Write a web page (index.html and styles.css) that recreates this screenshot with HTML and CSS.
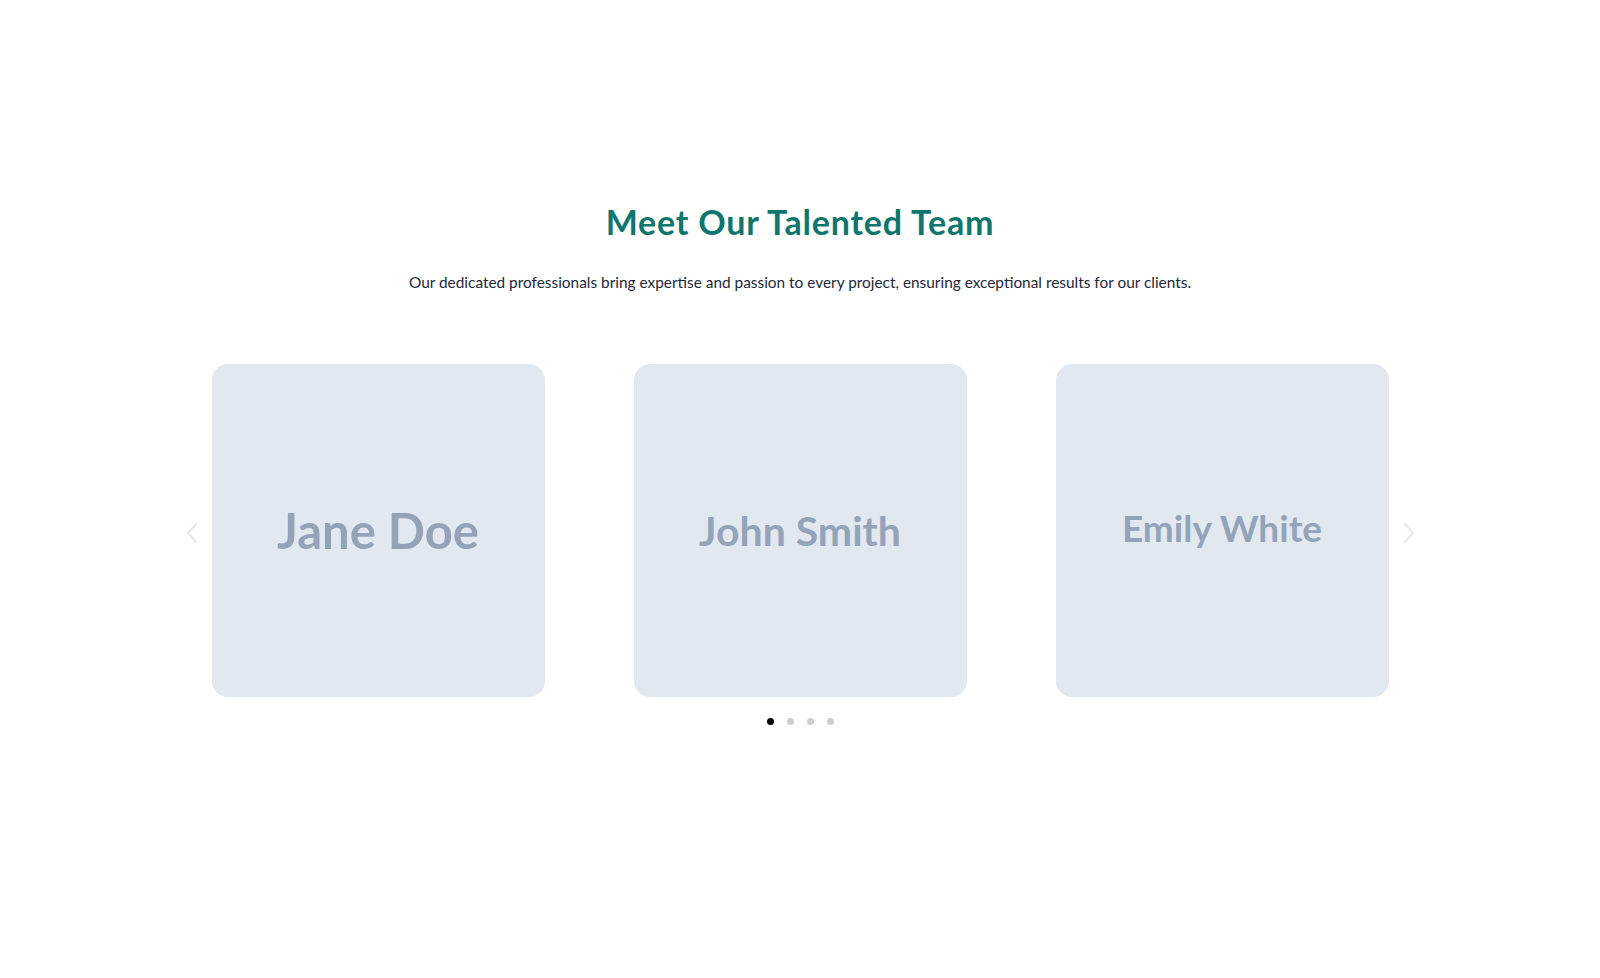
FILE: index.html
```html
<!DOCTYPE html>
<html lang="en">

<head>
  <meta charset="UTF-8">
  <meta name="viewport" content="width=device-width, initial-scale=1.0">
  <title>Our Team</title>
  <link rel="stylesheet" href="styles.css">
</head>

<body>
  <section class="team-section">
    <h2 class="team-title">Meet Our Talented Team</h2>
    <p class="team-intro">Our dedicated professionals bring expertise and passion to every project, ensuring exceptional results for our clients.</p>

    <div class="team-slider">
      <button class="slider-arrow" aria-label="Previous">
        <svg width="12" height="22" viewBox="0 0 12 22" fill="none">
          <path d="M10 2 L2 11 L10 20" stroke="currentColor" stroke-width="2.5" stroke-linecap="round" stroke-linejoin="round" />
        </svg>
      </button>

      <div class="slider-track">
        <div class="member-card"><span class="member-name name-lg">Jane Doe</span></div>
        <div class="member-card"><span class="member-name name-md">John Smith</span></div>
        <div class="member-card"><span class="member-name name-sm">Emily White</span></div>
      </div>

      <button class="slider-arrow" aria-label="Next">
        <svg width="12" height="22" viewBox="0 0 12 22" fill="none">
          <path d="M2 2 L10 11 L2 20" stroke="currentColor" stroke-width="2.5" stroke-linecap="round" stroke-linejoin="round" />
        </svg>
      </button>
    </div>

    <div class="slider-dots">
      <span class="dot active"></span>
      <span class="dot"></span>
      <span class="dot"></span>
      <span class="dot"></span>
    </div>
  </section>
</body>

</html>
```

FILE: styles.css
```css
body {
  margin: 0;
  background: #ffffff;
  font-family: "Lato", "Liberation Sans", sans-serif;
}

.team-section {
  padding: 202px 0 100px;
  text-align: center;
}

.team-title {
  margin: 0;
  font-size: 34px;
  line-height: 1.2;
  font-weight: 700;
  letter-spacing: 0.8px;
  color: #0f766e;
}

.team-intro {
  margin: 28px 0 0;
  font-size: 15.4px;
  line-height: 1.5;
  color: #1e293b;
}

.team-slider {
  display: flex;
  justify-content: center;
  align-items: center;
  gap: 10px;
  margin-top: 70px;
}

.slider-track {
  display: flex;
  gap: 89px;
}

.member-card {
  width: 333px;
  height: 333px;
  border-radius: 16px;
  background: #e2e8f0;
  display: flex;
  align-items: center;
  justify-content: center;
}

.member-name {
  font-weight: 700;
  color: #94a3b8;
  line-height: 1;
}

.name-lg {
  font-size: 49px;
}

.name-md {
  font-size: 41px;
}

.name-sm {
  font-size: 37px;
  margin-bottom: 6px;
}

.slider-arrow {
  width: 20px;
  padding: 5px 0 0;
  border: none;
  background: none;
  color: #e8eaed;
  cursor: pointer;
  display: flex;
  justify-content: center;
}

.slider-dots {
  display: flex;
  justify-content: center;
  gap: 13px;
  margin-top: 21px;
}

.dot {
  width: 7px;
  height: 7px;
  border-radius: 50%;
  background: #cccccc;
}

.dot.active {
  background: #000000;
}
```
